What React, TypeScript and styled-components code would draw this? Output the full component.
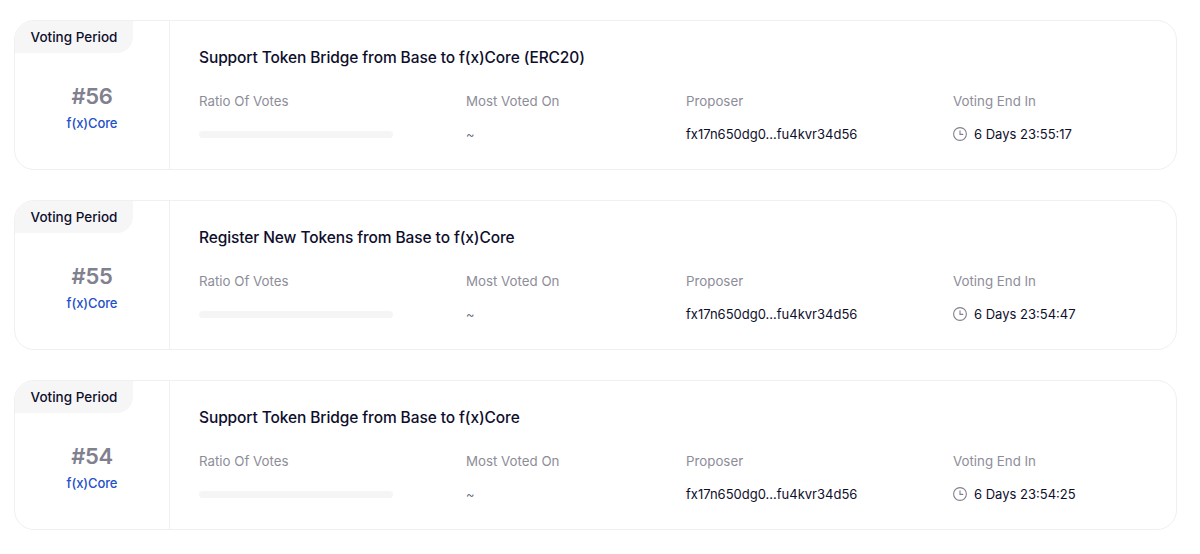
import React, { FC } from 'react';
import styled, { createGlobalStyle } from 'styled-components';

const GlobalStyle = createGlobalStyle`
  html, body {
    margin: 0;
    padding: 0;
    background: #fff;
    font-family: Inter, "Noto Sans", sans-serif;
  }
`;

const Page = styled.div`
  display: flex;
  flex-direction: column;
  gap: 30px;
  width: 1163px;
  padding: 20px 0 0 14px;
`;

const Card = styled.div`
  display: flex;
  height: 150px;
  box-sizing: border-box;
  background: #fff;
  border: 1px solid #f0f0f2;
  border-radius: 20px;
  overflow: hidden;
`;

const Side = styled.div`
  display: flex;
  flex-direction: column;
  flex: 0 0 154px;
  border-right: 1px solid #f0f0f2;
`;

const Badge = styled.div`
  width: 118px;
  height: 32px;
  background: #f6f6f7;
  border-bottom-right-radius: 16px;
  color: #0e0e2c;
  font-size: 13.5px;
  font-weight: 500;
  line-height: 33px;
  text-align: center;
`;

const SideBody = styled.div`
  display: flex;
  flex-direction: column;
  align-items: center;
  padding-top: 28px;
`;

const Num = styled.div`
  color: #80808f;
  font-size: 22px;
  font-weight: 600;
  line-height: 30px;
  letter-spacing: -0.3px;
`;

const Chain = styled.div`
  margin-top: 2px;
  color: #2450c8;
  font-size: 13px;
  font-weight: 500;
  line-height: 20px;
  letter-spacing: -0.1px;
`;

const Main = styled.div`
  display: flex;
  flex-direction: column;
  flex: 1;
  padding: 27px 0 0 29px;
`;

const Title = styled.div`
  color: #0e0e2c;
  font-size: 15.5px;
  font-weight: 500;
  line-height: 20px;
  letter-spacing: -0.1px;
`;

const Columns = styled.div`
  display: grid;
  grid-template-columns: 267px 220px 267px 1fr;
  margin-top: 23px;
`;

const Label = styled.div`
  color: #8d8d99;
  font-size: 13.3px;
  line-height: 20px;
`;

const Value = styled.div`
  display: flex;
  align-items: center;
  gap: 7px;
  height: 20px;
  margin-top: 13px;
  color: #0e0e2c;
  font-size: 13px;
`;

const Empty = styled(Value)`
  color: #4f4f5e;
  font-weight: 300;
`;

const Track = styled.div`
  width: 194px;
  height: 7px;
  background: #f5f5f6;
  border-radius: 4px;
`;

const Clock: FC = () => (
  <svg width="14" height="14" viewBox="0 0 14 14" fill="none" stroke="#80808f" strokeWidth="1.1" strokeLinecap="round">
    <circle cx="7" cy="7" r="6.4" />
    <path d="M7 3.8V7.4H9.8" />
  </svg>
);

type Proposal = { id: number; title: string; left: string };

const proposals: Proposal[] = [
  { id: 56, title: 'Support Token Bridge from Base to f(x)Core (ERC20)', left: '6 Days 23:55:17' },
  { id: 55, title: 'Register New Tokens from Base to f(x)Core', left: '6 Days 23:54:47' },
  { id: 54, title: 'Support Token Bridge from Base to f(x)Core', left: '6 Days 23:54:25' },
];

const App: FC = () => (
  <>
    <GlobalStyle />
    <Page>
      {proposals.map((p) => (
        <Card key={p.id}>
          <Side>
            <Badge>Voting Period</Badge>
            <SideBody>
              <Num>#{p.id}</Num>
              <Chain>f(x)Core</Chain>
            </SideBody>
          </Side>
          <Main>
            <Title>{p.title}</Title>
            <Columns>
              <div>
                <Label>Ratio Of Votes</Label>
                <Value><Track /></Value>
              </div>
              <div>
                <Label>Most Voted On</Label>
                <Empty>~</Empty>
              </div>
              <div>
                <Label>Proposer</Label>
                <Value>fx17n650dg0...fu4kvr34d56</Value>
              </div>
              <div>
                <Label>Voting End In</Label>
                <Value><Clock />{p.left}</Value>
              </div>
            </Columns>
          </Main>
        </Card>
      ))}
    </Page>
  </>
);

export default App;
